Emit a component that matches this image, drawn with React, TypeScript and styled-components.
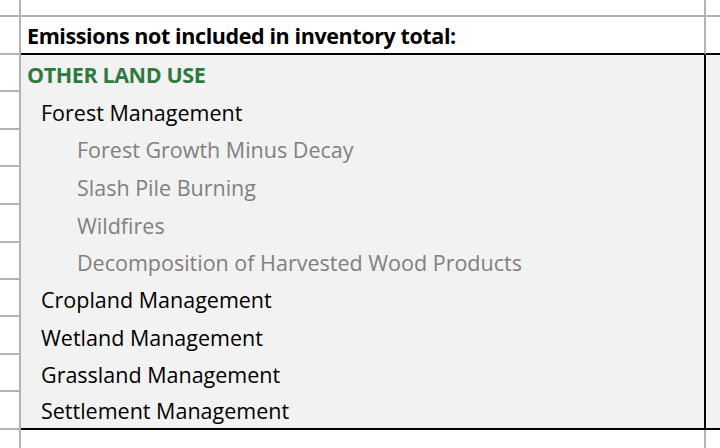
import styled, { createGlobalStyle } from 'styled-components';

const GlobalStyle = createGlobalStyle`
  html, body {
    margin: 0;
    padding: 0;
    background: #ffffff;
  }
  * {
    box-sizing: border-box;
  }
`;

const GRID = '#b2b2b2';
const FILL = '#f2f2f2';

const Sheet = styled.div`
  width: 720px;
  height: 448px;
  overflow: hidden;
  display: flex;
  flex-direction: column;
  font-family: 'Open Sans', Lato, 'Liberation Sans', sans-serif;
  font-size: 21.5px;
  color: #000000;
`;

const Row = styled.div<{ $h: number }>`
  display: grid;
  grid-template-columns: 21px 685px 1fr;
  height: ${(p) => p.$h}px;
  flex-shrink: 0;
`;

const Gutter = styled.div<{ $line?: boolean }>`
  border-right: 2px solid ${GRID};
  border-bottom: ${(p) => (p.$line ? `2px solid ${GRID}` : 'none')};
`;

const MainCell = styled.div<{ $fill?: boolean; $edge?: string; $bottom?: string }>`
  background: ${(p) => (p.$fill ? FILL : 'transparent')};
  border-right: 2px solid ${(p) => p.$edge || GRID};
  border-bottom: ${(p) => (p.$bottom ? `2px solid ${p.$bottom}` : 'none')};
  display: flex;
  align-items: flex-end;
  overflow: hidden;
  white-space: nowrap;
`;

const SideCell = styled.div<{ $fill?: boolean; $bottom?: string }>`
  background: ${(p) => (p.$fill ? FILL : 'transparent')};
  border-bottom: ${(p) => (p.$bottom ? `2px solid ${p.$bottom}` : 'none')};
`;

const Label = styled.span<{ $indent: number; $tone?: 'green' | 'grey' | 'black'; $bold?: boolean }>`
  padding-left: ${(p) => p.$indent}px;
  padding-bottom: 4px;
  line-height: 26px;
  font-weight: ${(p) => (p.$bold ? 700 : 400)};
  letter-spacing: ${(p) => (p.$bold ? '-0.4px' : '0')};
  color: ${(p) => (p.$tone === 'green' ? '#2f7a42' : p.$tone === 'grey' ? '#808080' : '#000000')};
`;

type Item = { text: string; level: number };

const items: Item[] = [
  { text: 'OTHER LAND USE', level: 0 },
  { text: 'Forest Management', level: 1 },
  { text: 'Forest Growth Minus Decay', level: 2 },
  { text: 'Slash Pile Burning', level: 2 },
  { text: 'Wildfires', level: 2 },
  { text: 'Decomposition of Harvested Wood Products', level: 2 },
  { text: 'Cropland Management', level: 1 },
  { text: 'Wetland Management', level: 1 },
  { text: 'Grassland Management', level: 1 },
  { text: 'Settlement Management', level: 1 },
];

const heights = [37, 38, 37, 38, 38, 37, 37, 38, 37, 38];
const indents = [6, 20, 56];

const App: React.FC = () => {
  return (
    <>
      <GlobalStyle />
      <Sheet>
        <Row $h={17}>
          <Gutter $line />
          <MainCell $bottom={GRID} />
          <SideCell $bottom={GRID} />
        </Row>
        <Row $h={38}>
          <Gutter $line />
          <MainCell $bottom="#000000">
            <Label $indent={6} $bold>
              Emissions not included in inventory total:
            </Label>
          </MainCell>
          <SideCell $bottom="#000000" />
        </Row>
        {items.map((item, i) => {
          const last = i === items.length - 1;
          return (
            <Row key={item.text} $h={heights[i]}>
              <Gutter $line />
              <MainCell $fill $edge="#000000" $bottom={last ? '#000000' : undefined}>
                <Label
                  $indent={indents[item.level]}
                  $bold={item.level === 0}
                  $tone={item.level === 0 ? 'green' : item.level === 2 ? 'grey' : 'black'}
                >
                  {item.text}
                </Label>
              </MainCell>
              <SideCell $fill $bottom={last ? '#000000' : undefined} />
            </Row>
          );
        })}
        <Row $h={30}>
          <Gutter />
          <MainCell />
          <SideCell />
        </Row>
      </Sheet>
    </>
  );
};

export default App;
